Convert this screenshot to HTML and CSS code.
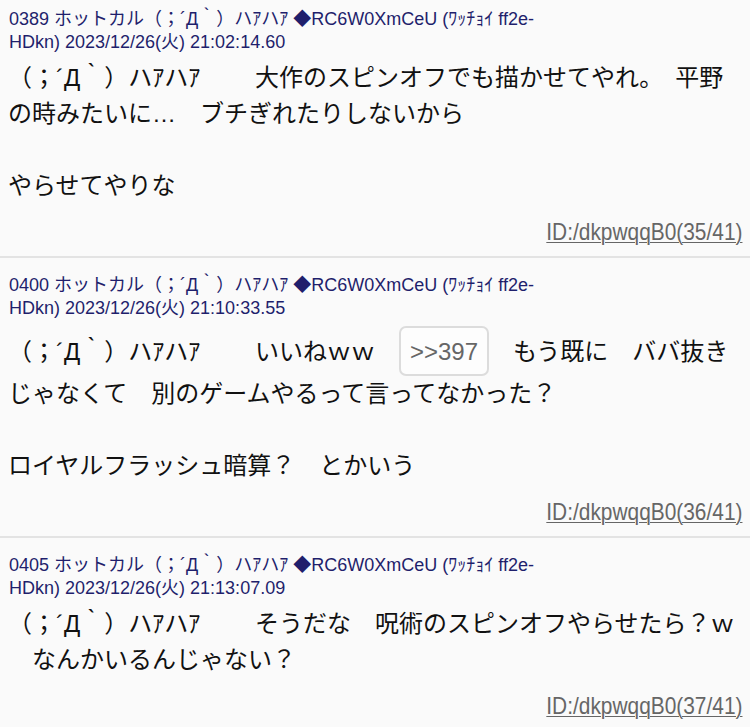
FILE: index.html
```html
<!DOCTYPE html>
<html lang="ja">
<head>
<meta charset="utf-8">
<title>スレッド</title>
<link rel="stylesheet" href="styles.css">
</head>
<body>
<div class="thread">
  <article class="post">
    <div class="head">0389 ホットカル（；´Д｀）ハｱハｱ ◆RC6W0XmCeU (ﾜｯﾁｮｲ ff2e-<br>HDkn) 2023/12/26(火) 21:02:14.60</div>
    <div class="body">（；´Д｀）ハｱハｱ　　 大作のスピンオフでも描かせてやれ。　平野<br>の時みたいに…　ブチぎれたりしないから<br><br>やらせてやりな</div>
    <div class="foot"><a class="id">ID:/dkpwqqB0(35/41)</a></div>
  </article>
  <article class="post">
    <div class="head">0400 ホットカル（；´Д｀）ハｱハｱ ◆RC6W0XmCeU (ﾜｯﾁｮｲ ff2e-<br>HDkn) 2023/12/26(火) 21:10:33.55</div>
    <div class="body">（；´Д｀）ハｱハｱ　　 いいねｗｗ　<span class="anchor">&gt;&gt;397</span>　もう既に　ババ抜き<br>じゃなくて　別のゲームやるって言ってなかった？<br><br>ロイヤルフラッシュ暗算？　とかいう</div>
    <div class="foot"><a class="id">ID:/dkpwqqB0(36/41)</a></div>
  </article>
  <article class="post">
    <div class="head">0405 ホットカル（；´Д｀）ハｱハｱ ◆RC6W0XmCeU (ﾜｯﾁｮｲ ff2e-<br>HDkn) 2023/12/26(火) 21:13:07.09</div>
    <div class="body">（；´Д｀）ハｱハｱ　　 そうだな　呪術のスピンオフやらせたら？ｗ<br>　なんかいるんじゃない？</div>
    <div class="foot"><a class="id">ID:/dkpwqqB0(37/41)</a></div>
  </article>
</div>
</body>
</html>
```
FILE: styles.css
```css
html, body {
  margin: 0;
  padding: 0;
  background: #fafafa;
}

.thread {
  margin-top: -8px;
}

.post {
  padding: 16px 8px 6px 9px;
  border-bottom: 2px solid #e3e3e3;
}

.head {
  font-family: "Liberation Sans", "Noto Sans CJK JP", sans-serif;
  font-size: 18px;
  line-height: 23px;
  color: #1f1f6c;
}

.body {
  margin-top: 6px;
  margin-left: -1px;
  font-family: "Liberation Sans", "Noto Sans CJK JP", sans-serif;
  font-size: 24px;
  line-height: 36px;
  color: #111;
  white-space: nowrap;
}

.anchor {
  display: inline-block;
  vertical-align: baseline;
  padding: 10px 9px 8px 9px;
  line-height: 28px;
  font-size: 24px;
  color: #666;
  background: #fdfdfd;
  border: 2px solid #dcdcdc;
  border-radius: 7px;
}

.foot {
  margin-top: 13px;
  text-align: right;
  line-height: 30px;
}

.id {
  display: inline-block;
  font-family: "Liberation Sans", sans-serif;
  font-size: 24px;
  color: #666;
  text-decoration: underline;
  text-decoration-thickness: 1px;
  text-underline-offset: 2px;
  transform: scaleX(0.87);
  transform-origin: right center;
}
```
